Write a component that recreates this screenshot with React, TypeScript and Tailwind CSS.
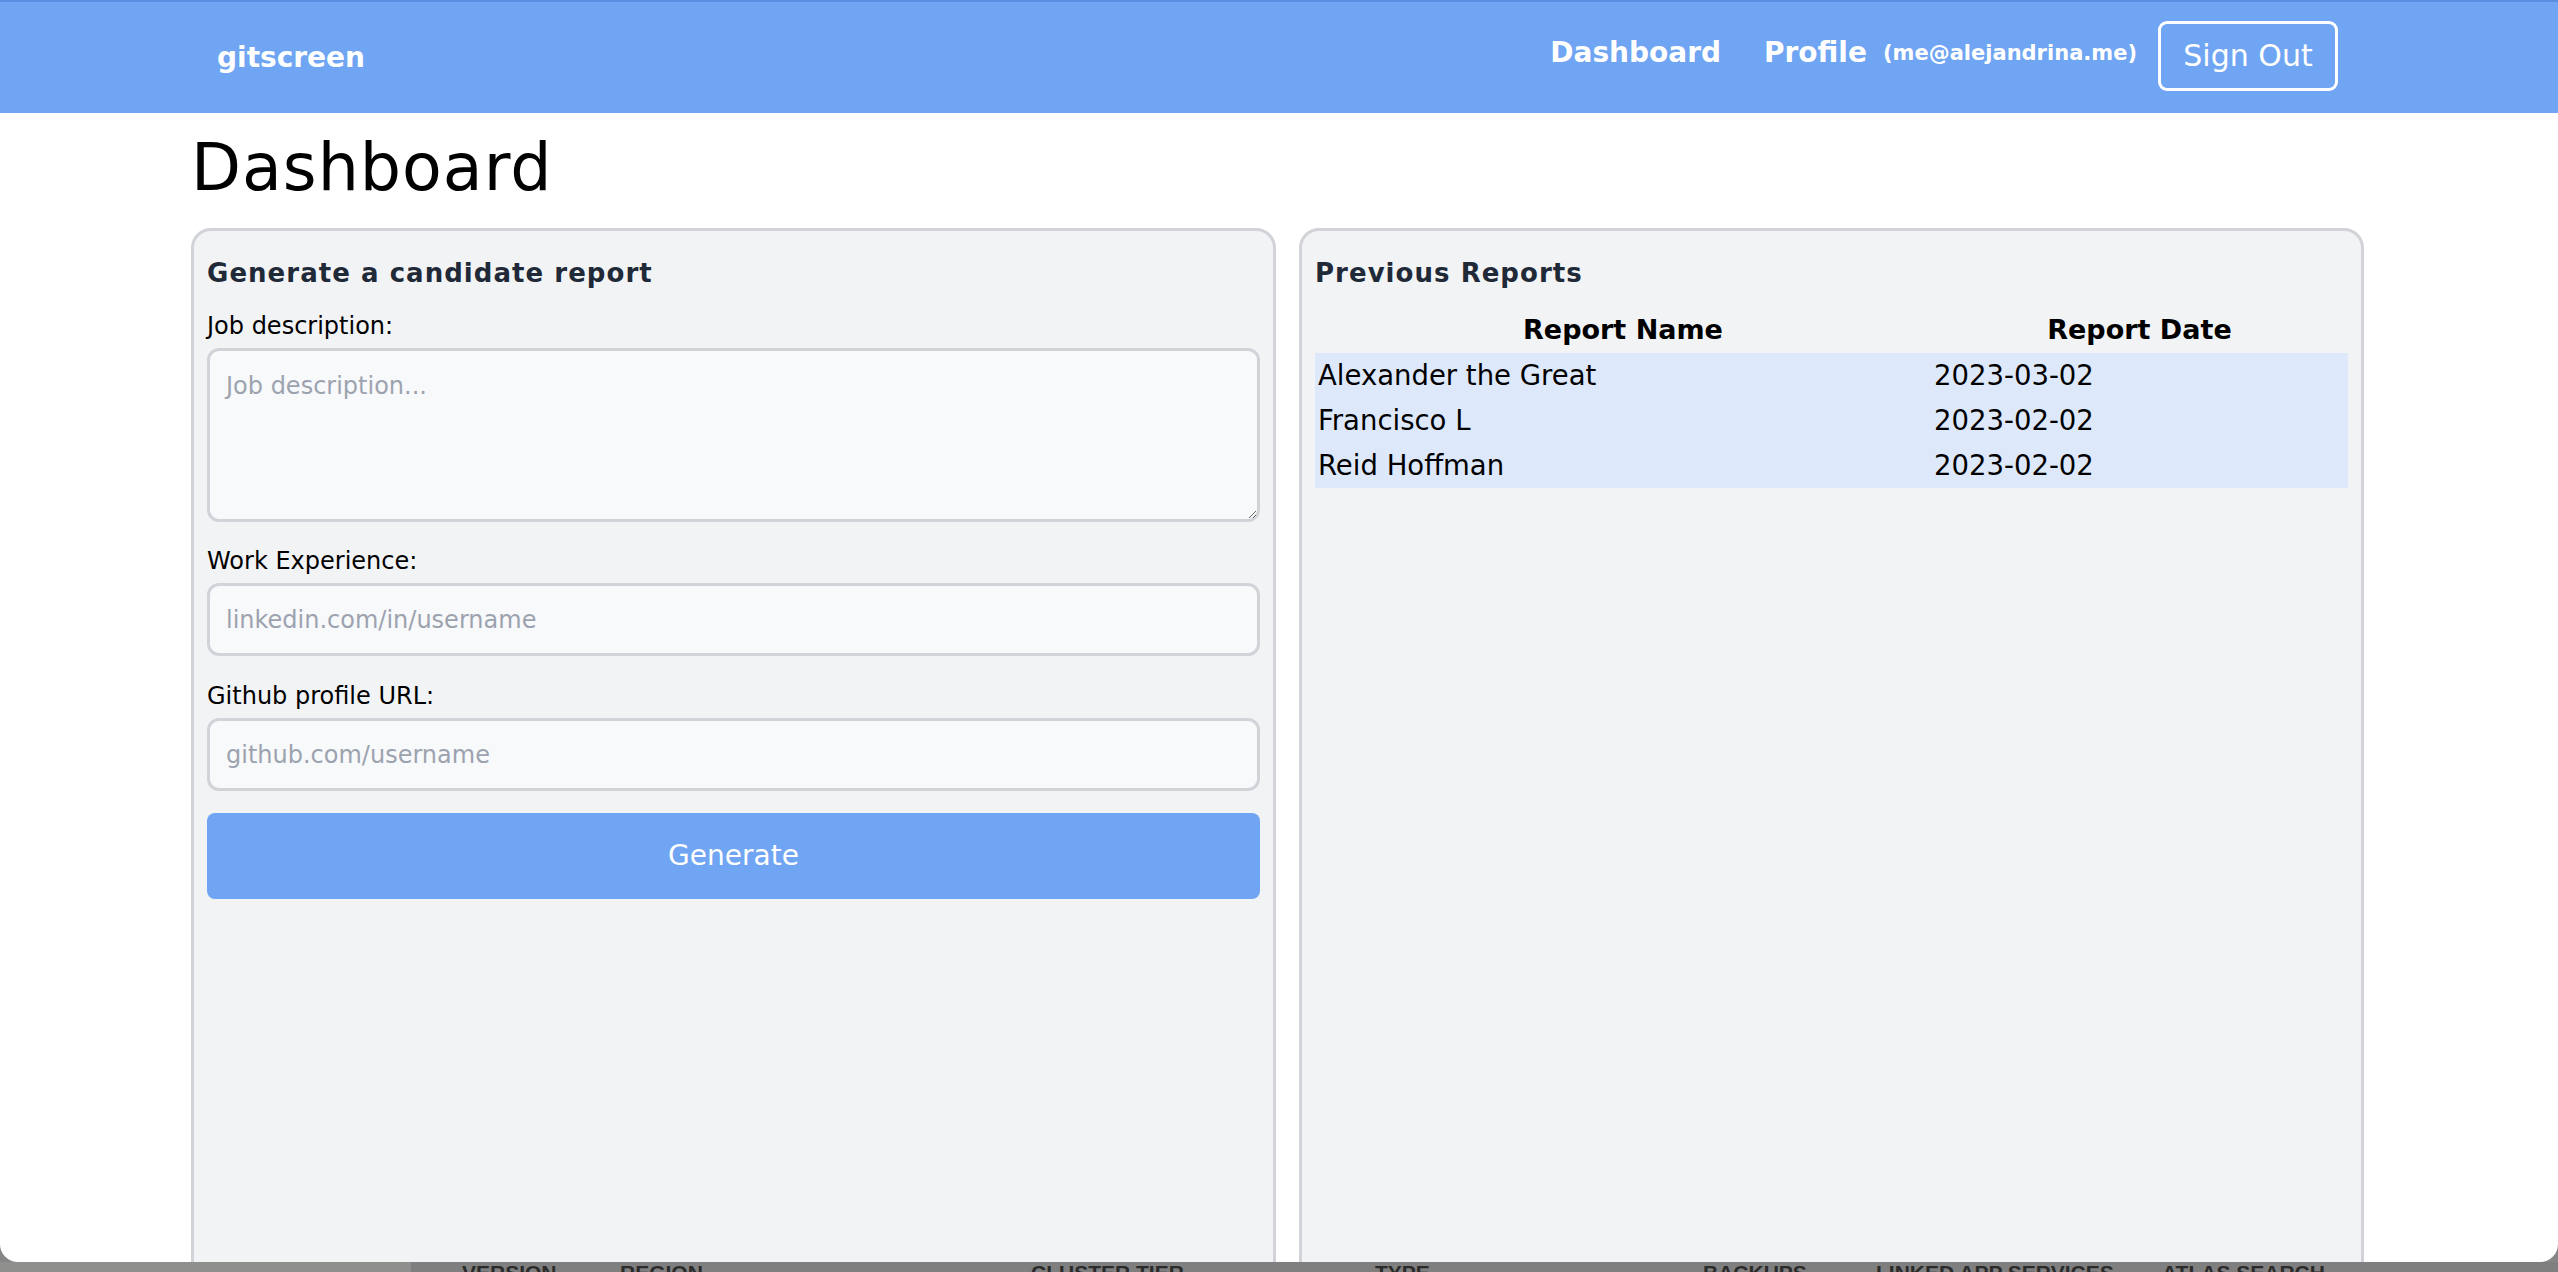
import React from "react";

const reports = [
  { name: "Alexander the Great", date: "2023-03-02" },
  { name: "Francisco L", date: "2023-02-02" },
  { name: "Reid Hoffman", date: "2023-02-02" },
];

const behind = [
  { label: "VERSION", w: "w-[158px]" },
  { label: "REGION", w: "w-[411px]" },
  { label: "CLUSTER TIER", w: "w-[344px]" },
  { label: "TYPE", w: "w-[328px]" },
  { label: "BACKUPS", w: "w-[173px]" },
  { label: "LINKED APP SERVICES", w: "w-[286px]" },
  { label: "ATLAS SEARCH", w: "w-[200px]" },
];

function Field({ label, placeholder, first }: { label: string; placeholder: string; first?: boolean }) {
  return (
    <>
      <label className={`${first ? "mt-[27px]" : "mt-[28px]"} text-[24px] leading-none text-black`}>{label}</label>
      <input
        type="text"
        placeholder={placeholder}
        className="mt-[10px] h-[73px] rounded-[12px] border-[3px] border-[#d1d3d9] bg-[#f8f9fb] px-[16px] text-[24px] text-black outline-none placeholder:text-[#9ca3af]"
      />
    </>
  );
}

export default function App() {
  return (
    <div className="flex h-[1272px] w-full flex-col overflow-hidden bg-[#858585] font-['DejaVu_Sans',sans-serif]">
      <div className="flex h-[1262px] shrink-0 flex-col overflow-hidden rounded-b-[18px] bg-white">
        <header className="flex h-[113px] shrink-0 items-center justify-between border-t-2 border-[#5a8de0] bg-[#6fa5f2] pl-[217px] pr-[220px] text-white">
          <span className="text-[28px] leading-none font-bold">gitscreen</span>
          <nav className="flex items-center">
            <a className="mb-[9px] text-[28px] leading-none font-bold">Dashboard</a>
            <a className="mb-[9px] ml-[43px] text-[28px] leading-none font-bold">Profile</a>
            <span className="mb-[9px] ml-[16px] text-[21px] leading-none font-bold">(me@alejandrina.me)</span>
            <button className="mb-[3px] ml-[21px] flex h-[70px] w-[180px] items-center justify-center rounded-[9px] border-[3px] border-white text-[30px] leading-none">
              Sign Out
            </button>
          </nav>
        </header>

        <main className="ml-[191px] flex w-[2173px] flex-col">
          <h1 className="mt-[22px] text-[65px] leading-none font-normal tracking-[0.015em] text-black">Dashboard</h1>

          <div className="mt-[28px] grid grid-cols-[1085px_1065px] gap-[23px]">
            <section className="flex h-[1100px] flex-col rounded-[20px] border-[3px] border-[#d1d3d9] bg-[#f2f3f5] px-[13px] pt-[29px]">
              <h2 className="text-[26px] leading-none font-bold tracking-[0.04em] text-[#1f2937]">
                Generate a candidate report
              </h2>
              <label className="mt-[28px] text-[24px] leading-none text-black">Job description:</label>
              <textarea
                placeholder="Job description..."
                className="mt-[10px] h-[174px] rounded-[12px] border-[3px] border-[#d1d3d9] bg-[#f8f9fb] px-[16px] pt-[17px] text-[24px] leading-[36px] text-black outline-none placeholder:text-[#9ca3af]"
              />
              <Field label="Work Experience:" placeholder="linkedin.com/in/username" first />
              <Field label="Github profile URL:" placeholder="github.com/username" />
              <button className="mt-[22px] h-[86px] rounded-[8px] bg-[#6fa5f2] text-[28px] leading-none text-white">
                Generate
              </button>
            </section>

            <section className="flex h-[1100px] flex-col rounded-[20px] border-[3px] border-[#d1d3d9] bg-[#f2f3f5] px-[13px] pt-[29px]">
              <h2 className="text-[26px] leading-none font-bold tracking-[0.04em] text-[#1f2937]">Previous Reports</h2>
              <table className="mt-[20px] w-full table-fixed border-collapse">
                <colgroup>
                  <col className="w-[616px]" />
                  <col />
                </colgroup>
                <thead>
                  <tr className="h-[47px]">
                    <th className="text-center text-[27px] leading-none font-bold text-black">Report Name</th>
                    <th className="text-center text-[27px] leading-none font-bold text-black">Report Date</th>
                  </tr>
                </thead>
                <tbody>
                  {reports.map((r) => (
                    <tr key={r.name} className="h-[45px] bg-[#dde8fa]">
                      <td className="pl-[3px] text-left text-[27.5px] leading-none text-black">{r.name}</td>
                      <td className="pl-[3px] text-left text-[27.5px] leading-none text-black">{r.date}</td>
                    </tr>
                  ))}
                </tbody>
              </table>
            </section>
          </div>
        </main>
      </div>

      <div className="flex h-[10px] shrink-0">
        <div className="w-[411px] bg-[#8f908e]" />
        <div className="flex flex-1 bg-[#7f7f7f] pl-[51px]">
          {behind.map((b) => (
            <span
              key={b.label}
              className={`${b.w} shrink-0 font-['Liberation_Sans_Narrow','Liberation_Sans',sans-serif] text-[21px] leading-none font-bold text-[#2b2b2b]`}
            >
              {b.label}
            </span>
          ))}
        </div>
      </div>
    </div>
  );
}
